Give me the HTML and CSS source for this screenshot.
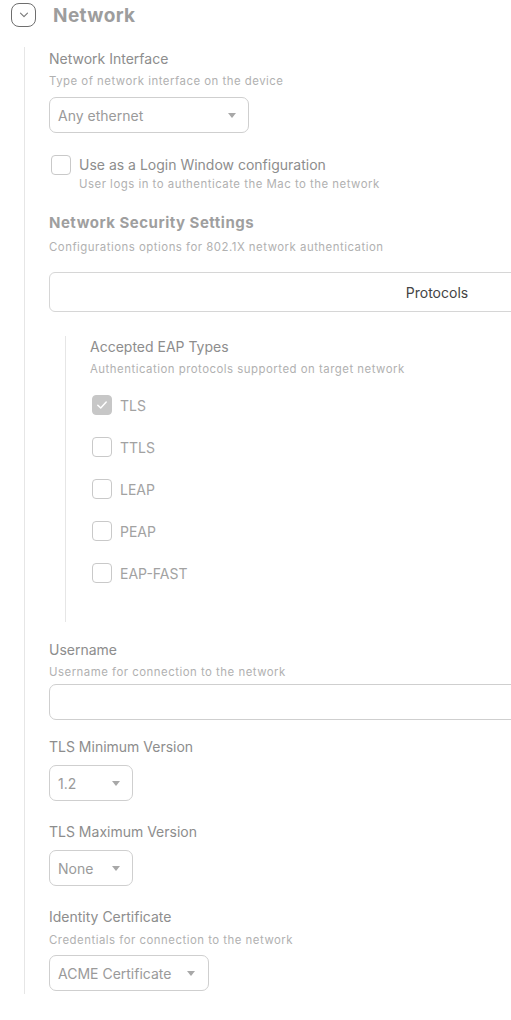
FILE: index.html
```html
<!DOCTYPE html>
<html>
<head>
<meta charset="utf-8">
<link rel="stylesheet" href="styles.css">
</head>
<body>
<div class="page">
  <div class="header">
    <button class="toggle" type="button">
      <svg width="10" height="6" viewBox="0 0 10 6"><path d="M1.5 1.2 L5 4.6 L8.5 1.2" fill="none" stroke="#777" stroke-width="1.1" stroke-linecap="round" stroke-linejoin="round"/></svg>
    </button>
    <div class="title">Network</div>
  </div>
  <div class="body">
    <div class="label">Network Interface</div>
    <div class="desc">Type of network interface on the device</div>
    <div class="select w-iface mt8"><span>Any ethernet</span><i class="caret"></i></div>

    <div class="check-row mt22">
      <span class="box"></span>
      <div>
        <div class="label">Use as a Login Window configuration</div>
        <div class="desc tight">User logs in to authenticate the Mac to the network</div>
      </div>
    </div>

    <div class="heading mt21">Network Security Settings</div>
    <div class="desc mt6">Configurations options for 802.1X network authentication</div>
    <div class="tabs"><span>Protocols</span></div>

    <div class="nested">
      <div class="label">Accepted EAP Types</div>
      <div class="desc">Authentication protocols supported on target network</div>
      <div class="eap-list">
        <div class="eap"><span class="box checked"><svg width="12" height="10" viewBox="0 0 12 10"><path d="M1.8 5.2 L4.7 8 L10.2 2" fill="none" stroke="#fff" stroke-width="1.5" stroke-linecap="round" stroke-linejoin="round"/></svg></span><span class="eap-name">TLS</span></div>
        <div class="eap"><span class="box"></span><span class="eap-name">TTLS</span></div>
        <div class="eap"><span class="box"></span><span class="eap-name">LEAP</span></div>
        <div class="eap"><span class="box"></span><span class="eap-name">PEAP</span></div>
        <div class="eap"><span class="box"></span><span class="eap-name">EAP-FAST</span></div>
      </div>
    </div>

    <div class="label mt18">Username</div>
    <div class="desc">Username for connection to the network</div>
    <div class="input mt4"></div>

    <div class="label mt17">TLS Minimum Version</div>
    <div class="select w-small mt8"><span>1.2</span><i class="caret"></i></div>

    <div class="label mt21">TLS Maximum Version</div>
    <div class="select w-small mt8"><span>None</span><i class="caret"></i></div>

    <div class="label mt21">Identity Certificate</div>
    <div class="desc mt5">Credentials for connection to the network</div>
    <div class="select w-cert mt7"><span>ACME Certificate</span><i class="caret"></i></div>
  </div>
</div>
</body>
</html>
```
FILE: styles.css
```css
html, body {
  margin: 0;
  padding: 0;
  background: #fff;
  overflow-x: hidden;
}
body {
  font-family: Inter, "Liberation Sans", Arial, sans-serif;
  color: #8c8c8c;
  width: 511px;
  overflow: hidden;
}
.page {
  width: 511px;
  overflow: hidden;
}
.header {
  display: flex;
  align-items: center;
  padding: 3px 0 0 11px;
  height: 24px;
}
.toggle {
  width: 25px;
  height: 24px;
  box-sizing: border-box;
  border: 1px solid #6e6e6e;
  border-radius: 8px;
  background: #fff;
  padding: 0;
  display: flex;
  align-items: center;
  justify-content: center;
}
.title {
  margin: 2px 0 0 17px;
  font-size: 19px;
  font-weight: 700;
  color: #9d9d9d;
  line-height: 26px;
  letter-spacing: 0.4px;
}
.body {
  margin: 20px 0 0 24px;
  border-left: 1px solid #e6e6e6;
  padding: 2px 0 3px 24px;
}
.label {
  font-size: 14px;
  line-height: 20px;
  color: #8d8d8d;
  white-space: nowrap;
}
.desc {
  font-size: 11.4px;
  line-height: 16px;
  color: #b1b1b1;
  margin-top: 4px;
  letter-spacing: 0.5px;
  white-space: nowrap;
}
.desc.tight { margin-top: 1px; }
.heading {
  font-size: 15px;
  font-weight: 700;
  line-height: 20px;
  color: #9f9f9f;
  letter-spacing: 0.5px;
  white-space: nowrap;
}
.mt4 { margin-top: 4px; }
.mt5 { margin-top: 5px; }
.mt6 { margin-top: 6px; }
.mt7 { margin-top: 7px; }
.mt8 { margin-top: 8px; }
.mt17 { margin-top: 17px; }
.mt18 { margin-top: 18px; }
.mt21 { margin-top: 21px; }
.mt22 { margin-top: 22px; }

.select {
  box-sizing: border-box;
  height: 36px;
  border: 1px solid #cfcfcf;
  border-radius: 7px;
  display: flex;
  align-items: center;
  justify-content: space-between;
  padding: 0 12px 0 8px;
  font-size: 14px;
  color: #9a9a9a;
}
.w-iface { width: 200px; }
.w-small { width: 84px; padding-right: 12px; }
.w-cert { width: 160px; padding-right: 13px; }
.caret {
  width: 0;
  height: 0;
  border-left: 4px solid transparent;
  border-right: 4px solid transparent;
  border-top: 5px solid #a8a8a8;
}
.input {
  box-sizing: border-box;
  width: 800px;
  height: 36px;
  border: 1px solid #cfcfcf;
  border-radius: 7px;
}

.check-row {
  display: flex;
  align-items: flex-start;
  gap: 8px;
  padding-left: 2px;
}
.box {
  flex: none;
  box-sizing: border-box;
  width: 20px;
  height: 20px;
  border: 1px solid #c9c9c9;
  border-radius: 4px;
  background: #fff;
  display: flex;
  align-items: center;
  justify-content: center;
}
.box.checked {
  background: #c7c7c7;
  border-color: #c7c7c7;
}

.tabs {
  box-sizing: border-box;
  margin-top: 17px;
  width: 776px;
  height: 40px;
  border: 1px solid #d6d6d6;
  border-radius: 6px;
  display: flex;
  align-items: center;
  justify-content: center;
  font-size: 14px;
  color: #444;
}

.nested {
  margin: 24px 0 0 16px;
  border-left: 1px solid #e6e6e6;
  padding: 1px 0 39px 24px;
}
.eap-list {
  margin-top: 18px;
  display: flex;
  flex-direction: column;
  gap: 22px;
  padding-left: 2px;
}
.eap {
  display: flex;
  align-items: center;
  gap: 8px;
  height: 20px;
}
.eap-name {
  font-size: 14px;
  color: #a2a2a2;
}
```
